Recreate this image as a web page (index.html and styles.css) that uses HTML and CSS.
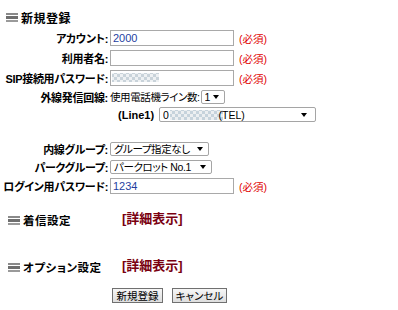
FILE: index.html
```html
<!DOCTYPE html>
<html lang="ja">
<head>
    <meta charset="UTF-8">
    <title>新規登録</title>
    <link rel="stylesheet" href="styles.css">
</head>
<body>
    <form class="page">
        <h2 class="section-title">
            <svg class="bar-icon" width="12" height="9" viewBox="0 0 12 9"><rect y="0" width="12" height="2" fill="#8a8a8a"/><rect y="3" width="12" height="3" fill="#6f6f6f"/><rect y="7" width="12" height="2" fill="#9a9a9a"/></svg>
            新規登録
        </h2>

        <div class="form">
            <div class="row">
                <label class="label">アカウント:</label>
                <div class="field"><input type="text" class="text" value="2000"><span class="req">(必須)</span></div>
            </div>
            <div class="row">
                <label class="label">利用者名:</label>
                <div class="field"><input type="text" class="text" value=""><span class="req">(必須)</span></div>
            </div>
            <div class="row">
                <label class="label">SIP接続用パスワード:</label>
                <div class="field"><input type="text" class="text masked" value=""><span class="req">(必須)</span></div>
            </div>
            <div class="row row-line">
                <label class="label">外線発信回線:</label>
                <div class="field">使用電話機ライン数:<select class="select select-count"><option>1</option><option>2</option></select></div>
            </div>
            <div class="row row-tel">
                <span class="label"></span>
                <div class="field field-tel"><b class="line-name">(Line1)</b><select class="select select-tel"><option>0&nbsp;&nbsp;&nbsp;&nbsp;&nbsp;&nbsp;&nbsp;&nbsp;&nbsp;&nbsp;&nbsp;&nbsp;&nbsp;&nbsp;&nbsp;&nbsp;&nbsp;(TEL)</option></select></div>
            </div>
            <div class="spacer"></div>
            <div class="row row-select">
                <label class="label">内線グループ:</label>
                <div class="field"><select class="select select-group"><option>グループ指定なし</option></select></div>
            </div>
            <div class="row row-select">
                <label class="label">パークグループ:</label>
                <div class="field"><select class="select select-park"><option>パークロット No.1</option></select></div>
            </div>
            <div class="row">
                <label class="label">ログイン用パスワード:</label>
                <div class="field"><input type="text" class="text" value="1234"><span class="req">(必須)</span></div>
            </div>
        </div>

        <div class="sub-section first">
            <h3 class="sub-title">
                <svg class="bar-icon" width="12" height="9" viewBox="0 0 12 9"><rect y="0" width="12" height="2" fill="#8a8a8a"/><rect y="3" width="12" height="3" fill="#6f6f6f"/><rect y="7" width="12" height="2" fill="#9a9a9a"/></svg>
                着信設定
            </h3>
            <a class="detail" href="#">[詳細表示]</a>
        </div>

        <div class="sub-section">
            <h3 class="sub-title">
                <svg class="bar-icon" width="12" height="9" viewBox="0 0 12 9"><rect y="0" width="12" height="2" fill="#8a8a8a"/><rect y="3" width="12" height="3" fill="#6f6f6f"/><rect y="7" width="12" height="2" fill="#9a9a9a"/></svg>
                オプション設定
            </h3>
            <a class="detail" href="#">[詳細表示]</a>
        </div>

        <div class="buttons">
            <button type="button" class="btn btn-submit">新規登録</button>
            <button type="button" class="btn btn-cancel">キャンセル</button>
        </div>
    </form>
</body>
</html>
```

FILE: styles.css
```css
html, body {
    margin: 0;
    background-color: white;
}
body {
    font-family: "Liberation Sans", "Noto Sans CJK JP", sans-serif;
    font-size: 11px;
    color: #000;
    font-feature-settings: "palt";
}
.page {
    padding-top: 8px;
}
.section-title {
    display: flex;
    align-items: center;
    gap: 3px;
    height: 18px;
    margin: 0;
    padding-left: 6px;
    font-size: 12px;
    font-weight: bold;
    letter-spacing: 0.5px;
}
.bar-icon {
    display: block;
}
.form {
    margin-top: 2px;
}
.row {
    display: grid;
    grid-template-columns: 108px 1fr;
    column-gap: 2px;
    align-items: center;
    height: 20px;
}
.row-line {
    height: 17px;
}
.row-tel {
    height: 19px;
}
.row-select {
    height: 18px;
}
.spacer {
    height: 16px;
}
.label {
    text-align: right;
    font-size: 11px;
    font-weight: bold;
    letter-spacing: -0.3px;
    white-space: nowrap;
}
.field {
    display: flex;
    align-items: center;
    white-space: nowrap;
    font-size: 10.5px;
    letter-spacing: -0.4px;
}
.field-tel {
    padding-left: 8px;
}
.line-name {
    margin-right: 5px;
    font-size: 11px;
    letter-spacing: 0;
}
input.text {
    box-sizing: border-box;
    width: 124px;
    height: 16px;
    margin: 0;
    padding: 0 2px;
    border: 1px solid #a9a9a9;
    font-family: "Liberation Sans", sans-serif;
    font-size: 11px;
    color: #1f3f9f;
    outline: none;
}
input.masked {
    background:
        linear-gradient(to right, #fff 1px, transparent 1px, transparent 48px, #fff 48px),
        linear-gradient(to bottom, #fff 2px, transparent 2px, transparent 11px, #fff 11px),
        repeating-conic-gradient(#c9d3da 0 25%, #eef1f3 0 50%) 0 0 / 6px 6px;
}
.req {
    margin-left: 5px;
    color: #e00000;
    letter-spacing: 0;
}
.select {
    box-sizing: border-box;
    appearance: none;
    height: 14px;
    margin: 0;
    padding: 0 10px 0 3px;
    border: 1px solid #a5a5a5;
    border-radius: 2px;
    font-family: "Liberation Sans", "Noto Sans CJK JP", sans-serif;
    font-size: 10.5px;
    font-feature-settings: "palt";
    letter-spacing: -0.4px;
    line-height: 12px;
    color: #000;
    background: #fff url("data:image/svg+xml,%3Csvg xmlns='http://www.w3.org/2000/svg' width='6' height='4'%3E%3Cpath d='M0 0h6L3 4z'/%3E%3C/svg%3E") no-repeat right 5px center;
    outline: none;
}
.select-count {
    width: 24px;
    margin-left: 1px;
}
.select-tel {
    width: 157px;
    height: 15px;
    letter-spacing: 0;
    background:
        url("data:image/svg+xml,%3Csvg xmlns='http://www.w3.org/2000/svg' width='6' height='4'%3E%3Cpath d='M0 0h6L3 4z'/%3E%3C/svg%3E") no-repeat right 8px center,
        linear-gradient(to right, #fff 10px, transparent 10px, transparent 63px, #fff 63px),
        linear-gradient(to bottom, #fff 2px, transparent 2px, transparent 12px, #fff 12px),
        repeating-conic-gradient(#c6d3dc 0 25%, #eceff1 0 50%) 0 0 / 6px 6px;
}
.select-group {
    width: 99px;
}
.select-park {
    width: 102px;
}
.sub-section {
    display: flex;
    align-items: center;
    height: 20px;
    margin-top: 27px;
}
.sub-section.first {
    margin-top: 14px;
}
.sub-title {
    display: flex;
    align-items: center;
    gap: 3px;
    box-sizing: border-box;
    width: 122px;
    margin: 0;
    padding-left: 8px;
    font-size: 11.5px;
    font-weight: bold;
    letter-spacing: 0.5px;
}
.detail {
    margin-bottom: 5px;
    font-size: 13px;
    font-weight: bold;
    color: #7a0010;
    text-decoration: none;
    font-feature-settings: normal;
}
.buttons {
    display: flex;
    gap: 9px;
    margin-top: 11px;
    padding-left: 112px;
}
.btn {
    box-sizing: border-box;
    height: 15px;
    margin: 0;
    padding: 0;
    border: 1px solid #707070;
    border-radius: 0;
    background: linear-gradient(#f6f6f6, #dedede);
    font-family: "Noto Sans CJK JP", sans-serif;
    font-size: 10.5px;
    font-feature-settings: "palt";
    line-height: 13px;
    color: #000;
}
.btn-submit {
    width: 51px;
}
.btn-cancel {
    width: 55px;
}
```
